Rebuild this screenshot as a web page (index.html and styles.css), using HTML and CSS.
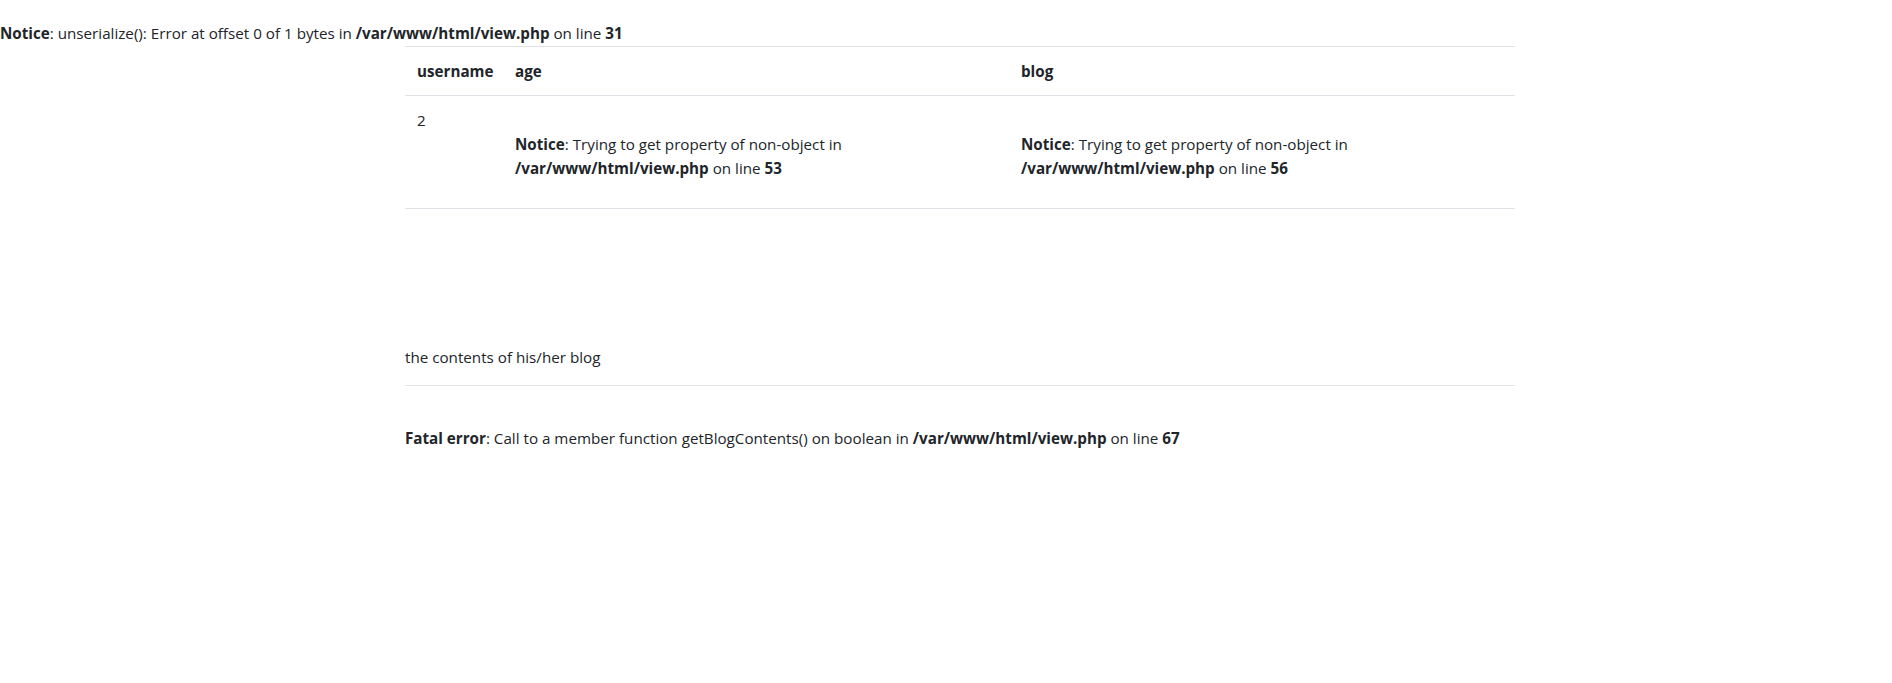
FILE: index.html
```html
<!DOCTYPE html>
<html lang="en">
<head>
<meta charset="utf-8">
<title>view</title>
<link rel="stylesheet" href="styles.css">
</head>
<body>
<div class="php-notice top-notice"><b>Notice</b>: unserialize(): Error at offset 0 of 1 bytes in <b>/var/www/html/view.php</b> on line <b>31</b></div>
<div class="container">
  <table class="table">
    <colgroup>
      <col class="col-user">
      <col class="col-age">
      <col class="col-blog">
    </colgroup>
    <thead>
      <tr>
        <th>username</th>
        <th>age</th>
        <th>blog</th>
      </tr>
    </thead>
    <tbody>
      <tr>
        <td>2</td>
        <td><br><b>Notice</b>: Trying to get property of non-object in <b>/var/www/html/view.php</b> on line <b>53</b></td>
        <td><br><b>Notice</b>: Trying to get property of non-object in <b>/var/www/html/view.php</b> on line <b>56</b></td>
      </tr>
    </tbody>
  </table>
  <div class="blog">
    <p class="blog-text">the contents of his/her blog</p>
    <hr class="divider">
    <div class="php-notice fatal"><b>Fatal error</b>: Call to a member function getBlogContents() on boolean in <b>/var/www/html/view.php</b> on line <b>67</b></div>
  </div>
</div>
</body>
</html>
```
FILE: styles.css
```css
html, body {
  margin: 0;
  padding: 0;
  background: #fff;
}

body {
  font-family: "Open Sans", "Noto Sans", "Liberation Sans", sans-serif;
  font-size: 15.2px;
  line-height: 24px;
  color: #212529;
}

b {
  font-weight: 700;
}

.top-notice {
  padding-top: 21px;
}

.container {
  width: 1110px;
  margin: 1px 0 0 405px;
}

.table {
  width: 100%;
  border-collapse: separate;
  border-spacing: 0;
  table-layout: fixed;
  margin: 0;
}

.col-user { width: 98px; }
.col-age { width: 506px; }
.col-blog { width: 506px; }

.table th {
  text-align: left;
  font-weight: 700;
  padding: 12px;
  border-top: 1px solid #dee2e6;
  border-bottom: 1px solid #dee2e6;
  vertical-align: bottom;
  white-space: nowrap;
}

.table td {
  padding: 12px 12px 28px;
  vertical-align: top;
  border-bottom: 1px solid #dee2e6;
}

.blog {
  padding-top: 136px;
}

.blog-text {
  margin: 0 0 16px;
}

.divider {
  margin: 0 0 16px;
  border: 0;
  border-top: 1px solid rgba(0, 0, 0, 0.1);
  height: 0;
}

.fatal {
  padding-top: 24px;
}
```
